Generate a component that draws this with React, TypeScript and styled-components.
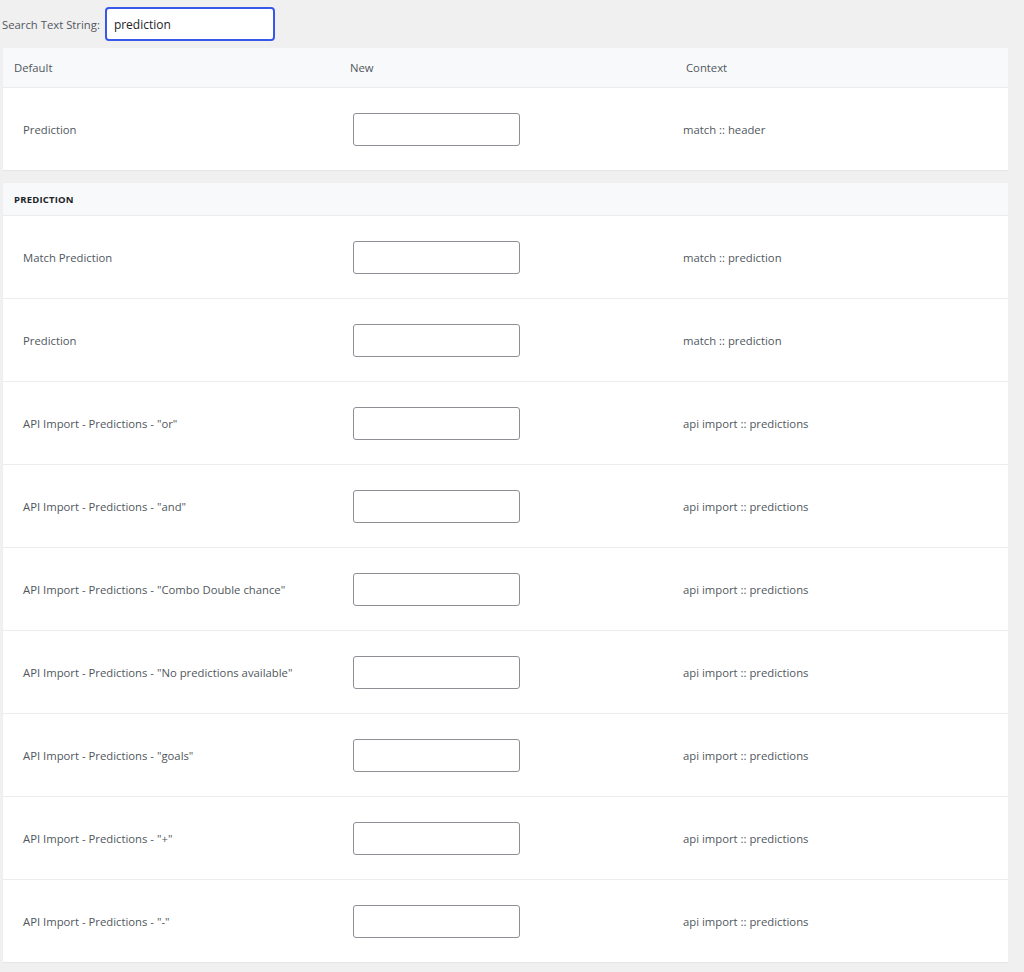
import React from "react";
import styled, { createGlobalStyle } from "styled-components";

const G = createGlobalStyle`
  html, body { margin: 0; background: #f0f0f1; font-family: "Open Sans", "Noto Sans", sans-serif; font-size: 11.3px; color: #50575e; }
`;
const Page = styled.div`padding: 6px 16px 8px 3px; width: 1005px;`;
const SearchRow = styled.div`display: flex; align-items: center; gap: 5px; margin-left: -1px; height: 36px;`;
const SearchInput = styled.input`
  width: 152px; height: 30px; border: 2px solid #3858e9; border-radius: 4px; padding: 0 7px;
  font: inherit; font-size: 12px; color: #1d2327; outline: none; background: #fff;
`;
const Table = styled.div<{ mt: number }>`background: #fff; margin-top: ${(p) => p.mt}px; box-shadow: 0 1px 1px rgba(0,0,0,.04);`;
const Grid = styled.div`display: grid; grid-template-columns: 340px 340px 1fr; align-items: center;`;
const Head = styled(Grid)`height: 39px; background: #f8f9fa; border-bottom: 1px solid #ececec; padding-left: 11px; & > span:nth-child(2){margin-left:-4px} & > span:nth-child(3){margin-left:-8px}`;
const Row = styled(Grid)`height: 82px; border-bottom: 1px solid #ececec; padding-left: 20px; &:last-child{border-bottom:none}`;
const Box = styled.input`display: block; width: 167px; height: 33px; box-sizing: border-box; border: 1px solid #8c8f94; border-radius: 3px; margin-left: -10px; background: #fff;`;
const Ctx = styled.span`margin-left: -20px;`;
const Section = styled.div`height: 32px; background: #f8f9fa; border-bottom: 1px solid #ececec; display: flex; align-items: center; padding-left: 11px; font-weight: 700; font-size: 9.5px; color: #1d2327; letter-spacing: .2px;`;

const rows: [string, string][] = [
  ["Match Prediction", "match :: prediction"],
  ["Prediction", "match :: prediction"],
  ['API Import - Predictions - "or"', "api import :: predictions"],
  ['API Import - Predictions - "and"', "api import :: predictions"],
  ['API Import - Predictions - "Combo Double chance"', "api import :: predictions"],
  ['API Import - Predictions - "No predictions available"', "api import :: predictions"],
  ['API Import - Predictions - "goals"', "api import :: predictions"],
  ['API Import - Predictions - "+"', "api import :: predictions"],
  ['API Import - Predictions - "-"', "api import :: predictions"],
];

export default function App() {
  return (
    <Page>
      <G />
      <SearchRow>
        <span>Search Text String:</span>
        <SearchInput defaultValue="prediction" />
      </SearchRow>
      <Table mt={6}>
        <Head><span>Default</span><span>New</span><span>Context</span></Head>
        <Row><span>Prediction</span><span><Box /></span><Ctx>match :: header</Ctx></Row>
      </Table>
      <Table mt={13}>
        <Section>PREDICTION</Section>
        {rows.map(([a, c], i) => (
          <Row key={i}><span>{a}</span><span><Box /></span><Ctx>{c}</Ctx></Row>
        ))}
      </Table>
    </Page>
  );
}
